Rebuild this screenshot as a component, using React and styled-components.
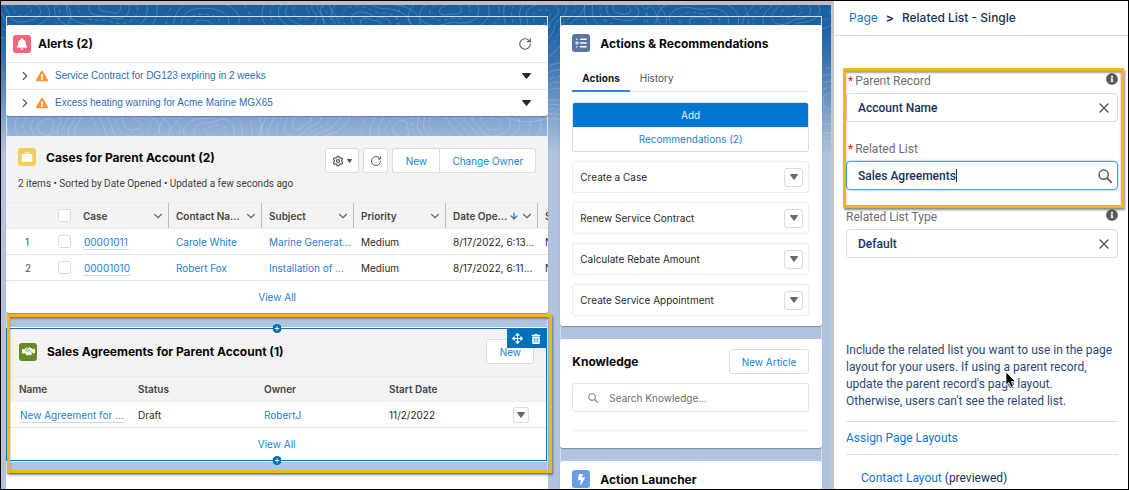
import { useState } from 'react';
import styled, { createGlobalStyle, css } from 'styled-components';
import {
  ArrowDown, ChevronDown, ChevronRight, RotateCw, Settings, X,
} from 'lucide-react';
import {
  FaArrowsAlt, FaBell, FaBolt, FaExclamationTriangle, FaInfoCircle, FaTrashAlt,
} from 'react-icons/fa';
import { FaHandshakeSimple } from 'react-icons/fa6';

const GlobalStyle = createGlobalStyle`
  * {
    box-sizing: border-box;
  }
  body {
    margin: 0;
    font-family: Inter, 'Liberation Sans', sans-serif;
    font-size: 10px;
    line-height: 16px;
    color: #2b2826;
  }
  button, input {
    font: inherit;
    color: inherit;
  }
  button {
    cursor: pointer;
  }
  a {
    color: #1b7fd6;
    text-decoration: none;
  }
  h2, p {
    margin: 0;
  }
  svg {
    display: block;
    flex: none;
  }
`;

const Builder = styled.div`
  display: flex;
  height: 100vh;
  overflow: hidden;
  border: 1px solid #000;
  background-color: #fff;
`;

const Canvas = styled.main`
  position: relative;
  flex: 1;
  min-width: 0;
  display: grid;
  grid-template-columns: minmax(0, 543fr) minmax(0, 262fr);
  gap: 12px;
  padding: 11px 9px 0 5px;
  overflow: hidden;
  border-top: 4px solid #c3bcc2;
  border-right: 3px solid #c6c6c8;
  background: linear-gradient(#17609f 0, #1d63a4 24px, #3a73b2 55px, #b0c4df 150px);
`;

const Contours = styled.svg`
  position: absolute;
  top: 0;
  left: 0;
  width: 100%;
  height: 150px;
`;

const Column = styled.div`
  position: relative;
  display: flex;
  flex-direction: column;
  padding-top: 8px;
  border: 1px solid #d5e0ef;
  border-bottom: none;
`;

const Card = styled.section`
  flex: none;
  margin: 0 -1px ${(props) => props.$gap || 0}px;
  border-radius: 3px;
  background-color: #fff;
  box-shadow: 0 1px 1px rgba(60, 80, 110, 0.45);
  overflow: hidden;
`;

const Filler = styled.div`
  flex: 1 0 40px;
  margin: 0 -1px;
  background-color: #fff;
`;

const IconTile = styled.span`
  display: flex;
  align-items: center;
  justify-content: center;
  flex: none;
  width: 18px;
  height: 18px;
  border-radius: 3px;
  color: #fff;
  background-color: ${(props) => props.$color};
`;

const Title = styled.h2`
  flex: 1;
  font-size: 12px;
  font-weight: 700;
  line-height: 20px;
  white-space: nowrap;
  color: #080707;
`;

const AlertsHeader = styled.header`
  display: flex;
  align-items: center;
  gap: 7px;
  height: 37px;
  padding: 0 16px 0 7px;
`;

const IconButton = styled.button`
  display: flex;
  align-items: center;
  justify-content: center;
  padding: 0;
  border: none;
  background: none;
  color: ${(props) => props.$color || '#5c5a58'};
`;

const AlertList = styled.ul`
  margin: 0;
  padding: 0;
  list-style: none;
  font-family: 'Liberation Sans', Arial, sans-serif;
`;

const AlertRow = styled.li`
  display: flex;
  align-items: center;
  height: 27px;
  padding: 0 17px 0 12px;
  border-top: 1px solid #e9e9e9;

  a {
    flex: 1;
    margin-left: 7px;
    color: #2a6fae;
  }

  > svg {
    margin-left: 4px;
  }
`;

const ListHeader = styled.header`
  padding: ${(props) => props.$top}px 12px ${(props) => props.$bottom}px 12px;
  background-color: #f3f3f3;
`;

const HeaderRow = styled.div`
  display: flex;
  align-items: ${(props) => (props.$centered ? 'center' : 'flex-start')};
  gap: 10px;
`;

const Toolbar = styled.div`
  display: flex;
  gap: 4px;
`;

const ButtonGroup = styled.div`
  display: flex;

  button:first-child:not(:last-child) {
    border-radius: 3px 0 0 3px;
    border-right: none;
  }
  button:last-child:not(:first-child) {
    border-radius: 0 3px 3px 0;
  }
`;

const Button = styled.button`
  display: flex;
  align-items: center;
  justify-content: center;
  gap: 3px;
  height: 25px;
  min-width: ${(props) => props.$width || 25}px;
  padding: 0;
  border: 1px solid #dddbda;
  border-radius: 3px;
  background-color: #fff;
  color: ${(props) => (props.$neutral ? '#5c5a58' : '#1b7fd6')};
`;

const Meta = styled.p`
  margin-top: 3px;
  font-family: Roboto, sans-serif;
  color: #3e3e3c;
`;

const TableWrap = styled.div`
  overflow: hidden;
`;

const Table = styled.table`
  width: ${(props) => props.$width || '100%'};
  table-layout: fixed;
  border-collapse: separate;
  border-spacing: 0;

  th, td {
    height: 26px;
    padding: 0 0 0 ${(props) => props.$pad}px;
    border-bottom: 1px solid #e5e5e5;
    text-align: left;
    white-space: nowrap;
    overflow: hidden;
  }
  th {
    height: ${(props) => props.$head}px;
    border-top: 1px solid #ececec;
    border-bottom-color: #ececec;
    background-color: #f3f3f3;
    font-weight: 600;
    color: #444;
  }
`;

const HeadCell = styled.div`
  display: flex;
  align-items: center;
  gap: 1px;
  height: 25px;
  padding-right: 3px;
  border-right: 1px solid #bcbcbc;

  span {
    flex: 1;
  }
`;

const RowNumber = styled.span`
  display: block;
  padding-left: 12px;
  color: #55524f;
`;

const Checkbox = styled.input`
  display: block;
  appearance: none;
  width: 13px;
  height: 13px;
  margin: 0;
  border: 1px solid #dddbda;
  border-radius: 2px;
  background-color: #fff;
`;

const RecordLink = styled.a`
  display: inline-block;
  line-height: 14px;
  padding: 0 1px;
  border-bottom: 1px solid #c5dcf2;
`;

const ViewAll = styled.div`
  display: flex;
  align-items: center;
  justify-content: center;
  height: ${(props) => props.$height}px;
`;

const MenuButton = styled.button`
  display: flex;
  align-items: center;
  justify-content: center;
  width: ${(props) => props.$size}px;
  height: ${(props) => props.$size}px;
  padding: 0;
  border: 1px solid #dddbda;
  border-radius: 3px;
  background-color: #fff;
  color: #6b6967;
`;

const SelectedSlot = styled.div`
  position: relative;
  flex: none;
  padding: 15px 0 13px;
`;

const highlight = css`
  border: 3px solid #f2b51b;
  box-shadow: 1px 2px 2px rgba(60, 60, 60, 0.6), inset 0 2px 2px rgba(60, 60, 60, 0.5);
  pointer-events: none;
`;

const SlotHighlight = styled.div`
  position: absolute;
  inset: 1px -5px 1px 0;
  ${highlight}
`;

const SelectedCard = styled.section`
  position: relative;
  margin-left: -1px;
  border: 1px solid #0b74bd;
  background-color: #fff;
  box-shadow: 0 -1px 0 #fff, 0 1px 0 #e3e9f2;
`;

const AddSpot = styled.button`
  position: absolute;
  left: 50%;
  ${(props) => props.$edge}: -5px;
  display: flex;
  padding: 0;
  border: none;
  border-radius: 50%;
  background: none;
  transform: translateX(-50%);
`;

const SelectionTools = styled.div`
  position: absolute;
  top: 0;
  right: 0;
  display: flex;
  align-items: center;
  gap: 8px;
  height: 19px;
  padding: 0 5px;
  background-color: #0070b8;
`;

const SideCard = styled(Card)`
  padding: ${(props) => props.$top}px 13px ${(props) => props.$bottom}px 12px;
`;

const Tabs = styled.div`
  display: flex;
  margin-top: 11px;
  border-bottom: 1px solid #e5e5e5;
`;

const Tab = styled.button`
  height: 27px;
  margin-bottom: -1px;
  padding: 0 10px;
  border: none;
  border-bottom: 2px solid ${(props) => (props.$active ? '#2b84ef' : 'transparent')};
  background: none;
  font-weight: ${(props) => (props.$active ? 700 : 400)};
  color: ${(props) => (props.$active ? '#1a1918' : '#55524f')};
`;

const StackedButtons = styled.div`
  display: grid;
  margin: 10px 0 9px;
  border: 1px solid #dddbda;
  border-radius: 3px;
  overflow: hidden;
`;

const StackedButton = styled.button`
  height: 24px;
  border: none;
  background-color: ${(props) => (props.$primary ? '#0176d3' : '#fff')};
  color: ${(props) => (props.$primary ? '#e6f1fb' : '#1b7fd6')};
`;

const ActionList = styled.ul`
  display: grid;
  gap: 9px;
  margin: 0;
  padding: 0;
  list-style: none;
`;

const ActionItem = styled.li`
  display: flex;
  align-items: center;
  justify-content: space-between;
  height: 32px;
  padding: 0 5px 0 7px;
  border: 1px solid #ecebea;
  border-radius: 3px;
`;

const SearchBox = styled.label`
  display: flex;
  align-items: center;
  gap: 11px;
  height: 29px;
  margin: 9px 0 18px;
  padding: 0 15px;
  border: 1px solid #e5e5e5;
  border-radius: 3px;
  color: #8a8886;

  input {
    flex: 1;
    min-width: 0;
    padding: 0;
    border: none;
    outline: none;
    background: none;
  }
  input::placeholder {
    color: #706e6b;
  }
`;

const Rule = styled.hr`
  margin: 0;
  border: none;
  border-top: 1px solid ${(props) => props.$color || '#dddbda'};
`;

const Sidebar = styled.aside`
  flex: none;
  width: 294px;
  overflow: hidden;
  font-size: 12px;
  color: #16325c;

  a {
    color: #0b78d0;
  }
`;

const Breadcrumb = styled.nav`
  display: flex;
  gap: 8px;
  height: 35px;
  padding: 9px 15px 0;
  border-bottom: 1px solid #dddbda;
  font-weight: 500;

  a {
    font-weight: 400;
  }
  b {
    font-weight: 700;
  }
`;

const Properties = styled.form`
  padding: 37px 10px 0 12px;
  font-family: Roboto, sans-serif;
`;

const RequiredFields = styled.div`
  position: relative;
`;

const FieldsHighlight = styled.div`
  position: absolute;
  inset: -5px -6px -18px -3px;
  ${highlight}
`;

const Field = styled.div`
  position: relative;
  margin-bottom: 19px;
`;

const FieldTop = styled.div`
  display: flex;
  justify-content: space-between;
  height: 20px;
  color: #706e6b;

  i {
    margin: 0 2px;
    font-style: normal;
    color: #e02020;
  }
`;

const FieldBox = styled.div`
  display: flex;
  align-items: center;
  height: 29px;
  padding: 0 5px 0 11px;
  border: 1px solid ${(props) => (props.$active ? '#4a9be8' : '#dddbda')};
  border-radius: 4px;
  box-shadow: ${(props) => (props.$active ? '0 0 2px #4a9be8' : 'none')};

  input {
    flex: 1;
    min-width: 0;
    padding: 0;
    border: none;
    outline: none;
    background: none;
    font-weight: 500;
  }
`;

const Caret = styled.span`
  position: absolute;
  left: 110px;
  bottom: 8px;
  width: 1px;
  height: 13px;
  background-color: #16325c;
`;

const Help = styled.p`
  position: relative;
  margin: 84px 0 11px;
  line-height: 17px;
  color: #2c4877;
`;

const Cursor = styled.svg`
  position: absolute;
  left: 159px;
  top: 29px;
`;

const AssignRow = styled.div`
  display: flex;
  align-items: center;
  height: 32px;
`;

const LayoutRow = styled.div`
  padding: 15px;
`;

const caseColumns = [
  { name: 'Case', width: 93 },
  { name: 'Contact Na...', width: 93 },
  { name: 'Subject', width: 92 },
  { name: 'Priority', width: 92 },
  { name: 'Date Ope...', width: 92, sorted: true },
  { name: 'Status', width: 92 },
];

const cases = [
  { id: '00001011', contact: 'Carole White', subject: 'Marine Generat...', date: '8/17/2022, 6:13...' },
  { id: '00001010', contact: 'Robert Fox', subject: 'Installation of ...', date: '8/17/2022, 6:11...' },
];

const alerts = [
  'Service Contract for DG123 expiring in 2 weeks',
  'Excess heating warning for Acme Marine MGX65',
];

const actions = [
  'Create a Case',
  'Renew Service Contract',
  'Calculate Rebate Amount',
  'Create Service Appointment',
];

// closed wobbly ring around a centre, used for the map background
const ring = (cx, cy, r, seed) => {
  const points = [];
  for (let i = 0; i <= 36; i += 1) {
    const a = (i / 36) * Math.PI * 2;
    const k = 1 + 0.2 * Math.sin(a * 2 + seed) + 0.13 * Math.cos(a * 3 + seed * 2);
    points.push(`${(cx + Math.cos(a) * r * k * 1.3).toFixed(1)} ${(cy + Math.sin(a) * r * k).toFixed(1)}`);
  }
  return `M${points.join('L')}Z`;
};

const centres = [[20, 4], [110, 2], [200, 22], [300, 6], [370, 20], [450, 4], [540, 12],
  [620, 2], [700, 18], [790, 6], [45, 122], [130, 118], [215, 126], [300, 116], [400, 124],
  [490, 118], [552, 90], [830, 95]];

const MapLines = () => (
  <Contours aria-hidden="true" fill="none" stroke="#fff" strokeOpacity="0.2">
    {centres.map(([x, y], n) => [7, 13, 19, 26, 33].map((r, i) => (
      <path key={`${x}-${r}`} d={ring(x, y, r, n * 1.7)} strokeDasharray={(n + i) % 3 === 0 ? '4 3' : undefined} />
    )))}
  </Contours>
);

const Triangle = ({ width = 8, height = 6 }) => (
  <svg width={width} height={height} viewBox="0 0 10 6" preserveAspectRatio="none" fill="currentColor">
    <path d="M.8 0h8.4c.7 0 1 .6.5 1.100L5.600 5.600a.8.8 0 0 1-1.200 0L.3 1.100C-.2.6.1 0 .8 0z" />
  </svg>
);

const PlusDot = () => (
  <svg width="9" height="9" viewBox="0 0 9 9">
    <circle cx="4.500" cy="4.500" r="4.500" fill="#0070b8" />
    <path d="M4.500 2.300v4.400M2.300 4.500h4.400" stroke="#fff" />
  </svg>
);

const Magnifier = ({ size }) => (
  <svg width={size} height={size} viewBox="0 0 14 14" fill="none" stroke="currentColor" strokeWidth="1.500" strokeLinecap="round">
    <circle cx="5.700" cy="5.700" r="4.600" />
    <path d="M9.200 9.200l3.900 3.900" strokeWidth="1.800" />
  </svg>
);

const Briefcase = () => (
  <svg width="12" height="12" viewBox="0 0 12 12" fill="#fff">
    <path d="M4.200 3V2c0-.4.3-.7.7-.7h2.200c.4 0 .7.3.7.7v1" fill="none" stroke="#fff" strokeWidth=".9" />
    <rect x=".7" y="3" width="10.600" height="7.800" rx="1" />
  </svg>
);

const Recommendations = () => (
  <svg width="12" height="12" viewBox="0 0 12 12" stroke="#fff" strokeWidth="1.400" strokeLinecap="round">
    <path d="M5.500 2.200h5.700M5.500 6h5.700M5.500 9.800h5.700M1.800 2.200h.1M1.800 9.800h.1" />
    <circle cx="1.900" cy="6" r="1.100" fill="none" strokeWidth="1" />
  </svg>
);

const AlertsCard = () => (
  <Card $gap={20}>
    <AlertsHeader>
      <IconTile $color="#f2677c"><FaBell size={12} /></IconTile>
      <Title>Alerts (2)</Title>
      <IconButton aria-label="Refresh alerts"><RotateCw size={14} strokeWidth={2} /></IconButton>
    </AlertsHeader>
    <AlertList>
      {alerts.map((text) => (
        <AlertRow key={text}>
          <IconButton aria-label="Expand"><ChevronRight size={14} /></IconButton>
          <FaExclamationTriangle size={12} color="#ff9238" />
          <a href="#alert">{text}</a>
          <IconButton $color="#2b2826" aria-label="More"><Triangle width={9} /></IconButton>
        </AlertRow>
      ))}
    </AlertList>
  </Card>
);

const CasesCard = () => (
  <Card>
    <ListHeader $top={12} $bottom={10}>
      <HeaderRow>
        <IconTile $color="#f1cf5b"><Briefcase /></IconTile>
        <Title>Cases for Parent Account (2)</Title>
        <Toolbar>
          <Button $width={34} $neutral aria-label="List settings">
            <Settings size={12} strokeWidth={2.5} />
            <Triangle width={5} height={4} />
          </Button>
          <Button $neutral aria-label="Refresh"><RotateCw size={12} /></Button>
          <ButtonGroup>
            <Button $width={47}>New</Button>
            <Button $width={97}>Change Owner</Button>
          </ButtonGroup>
        </Toolbar>
      </HeaderRow>
      <Meta>2 items • Sorted by Date Opened • Updated a few seconds ago</Meta>
    </ListHeader>
    <TableWrap>
      <Table $pad={7} $head={27} $width="624px">
        <colgroup>
          <col width="45" />
          <col width="25" />
          {caseColumns.map((column) => <col key={column.name} width={column.width} />)}
        </colgroup>
        <thead>
          <tr>
            <th aria-label="Row" />
            <th><Checkbox type="checkbox" aria-label="Select all" /></th>
            {caseColumns.map((column) => (
              <th key={column.name}>
                <HeadCell>
                  <span>{column.name}</span>
                  {column.sorted && <ArrowDown size={10} strokeWidth={3} color="#3a6ea8" />}
                  <ChevronDown size={14} color="#6b6967" />
                </HeadCell>
              </th>
            ))}
          </tr>
        </thead>
        <tbody>
          {cases.map((item, index) => (
            <tr key={item.id}>
              <td><RowNumber>{index + 1}</RowNumber></td>
              <td><Checkbox type="checkbox" aria-label={`Select ${item.id}`} /></td>
              <td><RecordLink href="#case">{item.id}</RecordLink></td>
              <td><a href="#contact">{item.contact}</a></td>
              <td><a href="#subject">{item.subject}</a></td>
              <td>Medium</td>
              <td>{item.date}</td>
              <td>New</td>
            </tr>
          ))}
        </tbody>
      </Table>
    </TableWrap>
    <ViewAll $height={32}><a href="#cases">View All</a></ViewAll>
  </Card>
);

const AgreementsCard = () => (
  <SelectedSlot>
    <SelectedCard>
      <ListHeader $top={10} $bottom={12}>
        <HeaderRow $centered>
          <IconTile $color="#668b25"><FaHandshakeSimple size={13} /></IconTile>
          <Title>Sales Agreements for Parent Account (1)</Title>
          <Button $width={48}>New</Button>
        </HeaderRow>
      </ListHeader>
      <Table $pad={12} $head={26}>
        <colgroup>
          <col width="119" />
          <col width="126" />
          <col width="125" />
          <col />
          <col width="45" />
        </colgroup>
        <thead>
          <tr>
            <th>Name</th>
            <th>Status</th>
            <th>Owner</th>
            <th>Start Date</th>
            <th aria-label="Actions" />
          </tr>
        </thead>
        <tbody>
          <tr>
            <td><RecordLink href="#agreement">New Agreement for ...</RecordLink></td>
            <td>Draft</td>
            <td><a href="#owner">RobertJ</a></td>
            <td>11/2/2022</td>
            <td><MenuButton $size={16} aria-label="Row actions"><Triangle /></MenuButton></td>
          </tr>
        </tbody>
      </Table>
      <ViewAll $height={32}><a href="#agreements">View All</a></ViewAll>
      <SelectionTools>
        <IconButton $color="#fff" aria-label="Move"><FaArrowsAlt size={11} /></IconButton>
        <IconButton $color="#fff" aria-label="Delete"><FaTrashAlt size={10} /></IconButton>
      </SelectionTools>
      <AddSpot $edge="top" aria-label="Add component before"><PlusDot /></AddSpot>
      <AddSpot $edge="bottom" aria-label="Add component after"><PlusDot /></AddSpot>
    </SelectedCard>
    <SlotHighlight />
  </SelectedSlot>
);

const ActionsCard = () => (
  <SideCard $gap={13} $top={9} $bottom={10}>
    <HeaderRow>
      <IconTile $color="#5876a3"><Recommendations /></IconTile>
      <Title>Actions &amp; Recommendations</Title>
    </HeaderRow>
    <Tabs role="tablist">
      <Tab role="tab" $active>Actions</Tab>
      <Tab role="tab">History</Tab>
    </Tabs>
    <StackedButtons>
      <StackedButton $primary>Add</StackedButton>
      <StackedButton>Recommendations (2)</StackedButton>
    </StackedButtons>
    <ActionList>
      {actions.map((name) => (
        <ActionItem key={name}>
          {name}
          <MenuButton $size={19} aria-label={`${name} menu`}><Triangle /></MenuButton>
        </ActionItem>
      ))}
    </ActionList>
  </SideCard>
);

const KnowledgeCard = () => (
  <SideCard $gap={13} $top={10} $bottom={17}>
    <HeaderRow $centered>
      <Title>Knowledge</Title>
      <Button $width={80}>New Article</Button>
    </HeaderRow>
    <SearchBox>
      <Magnifier size={10} />
      <input type="text" placeholder="Search Knowledge..." aria-label="Search Knowledge" />
    </SearchBox>
    <Rule $color="#eeeeee" />
  </SideCard>
);

const PropertyField = ({ id, label, initial, required, info, active }) => {
  const [value, setValue] = useState(initial);

  return (
    <Field>
      <FieldTop>
        <label htmlFor={id}>
          {required && <i>*</i>}
          {label}
        </label>
        {info && <FaInfoCircle size={12} color="#5c5a58" />}
      </FieldTop>
      <FieldBox $active={active}>
        <input id={id} type="text" value={value} onChange={(e) => setValue(e.target.value)} />
        <IconButton
          type="button"
          aria-label={active ? `Search ${label}` : `Clear ${label}`}
          onClick={() => !active && setValue('')}
        >
          {active ? <Magnifier size={14} /> : <X size={16} />}
        </IconButton>
      </FieldBox>
      {active && <Caret />}
    </Field>
  );
};

const App = () => (
  <>
    <GlobalStyle />
    <Builder>
      <Canvas>
        <MapLines />
        <Column>
          <AlertsCard />
          <CasesCard />
          <AgreementsCard />
          <Filler />
        </Column>
        <Column>
          <ActionsCard />
          <KnowledgeCard />
          <SideCard $top={9} $bottom={10}>
            <HeaderRow>
              <IconTile $color="#6a9ee3"><FaBolt size={11} /></IconTile>
              <Title>Action Launcher</Title>
            </HeaderRow>
          </SideCard>
        </Column>
      </Canvas>
      <Sidebar>
        <Breadcrumb>
          <a href="#page">Page</a>
          <b>&gt;</b>
          <span>Related List - Single</span>
        </Breadcrumb>
        <Properties>
          <RequiredFields>
            <PropertyField id="parent" label="Parent Record" initial="Account Name" required info />
            <PropertyField id="related" label="Related List" initial="Sales Agreements" required active />
            <FieldsHighlight />
          </RequiredFields>
          <PropertyField id="type" label="Related List Type" initial="Default" info />
          <Help>
            Include the related list you want to use in the page layout for your users. If using a
            parent record, update the parent record&apos;s page layout.
            <br />
            Otherwise, users can&apos;t see the related list.
            <Cursor width="12" height="18" viewBox="0 0 12 18">
              <path d="M1 1v13l3-2.700 2 5 2.300-1-2-4.800H10.500z" fill="#000" stroke="#fff" strokeWidth=".7" />
            </Cursor>
          </Help>
          <Rule />
          <AssignRow><a href="#assign">Assign Page Layouts</a></AssignRow>
          <Rule />
          <LayoutRow>
            <a href="#contact-layout">Contact Layout</a>
            {' (previewed)'}
          </LayoutRow>
        </Properties>
      </Sidebar>
    </Builder>
  </>
);

export default App;
